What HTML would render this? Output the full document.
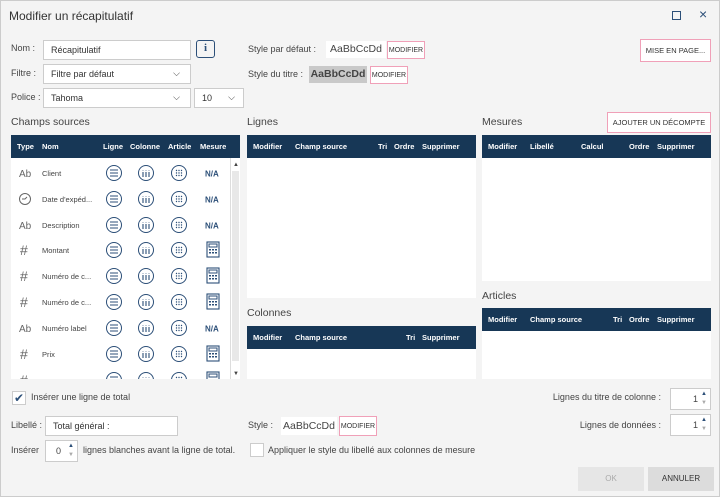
<!DOCTYPE html><html><head><meta charset="utf-8"><style>
*{box-sizing:border-box;margin:0;padding:0}
body{width:720px;height:497px;background:#f4f4f4;font-family:"Liberation Sans",sans-serif;font-size:9px;color:#444;position:relative;overflow:hidden;border:1px solid #ccc}
.a{position:absolute;white-space:nowrap}
.inp{position:absolute;background:#fff;border:1px solid #ccc;padding-left:7px;display:flex;align-items:center;font-size:9px;color:#333}
.btn{position:absolute;border:1px solid #f0a0b8;background:#fff;font-size:7px;display:flex;align-items:center;justify-content:center;color:#333}
.hd{position:absolute;background:#173756;color:#fff;font-weight:bold;font-size:7.5px;height:23px}
.hd span{position:absolute;top:7px}
.body{position:absolute;background:#fff}
.lbl{font-size:10.5px;color:#444}
.spin{position:absolute;background:#fff;border:1px solid #ccc;font-size:9px}
.spin b{position:absolute;right:12px;top:5px;font-weight:normal}
.spin i{position:absolute;right:3px;font-style:normal;font-size:6px;color:#2c4f78}
</style></head><body>
<div class="a" style="left:8px;top:8px;font-size:12px;color:#333">Modifier un récapitulatif</div>
<div class="a" style="left:671px;top:10px;width:9px;height:9px;border:1.5px solid #2c4f78"></div>
<div class="a" style="left:698px;top:5px;font-size:14px;color:#2c4f78">×</div>

<div class="a" style="left:10px;top:42px">Nom :</div>
<div class="inp" style="left:42px;top:39px;width:148px;height:20px">Récapitulatif</div>
<div class="a" style="left:195px;top:39px;width:19px;height:18px;border:1.5px solid #2c4f78;border-radius:3px;color:#2c4f78;font-weight:bold;font-size:11px;text-align:center;line-height:15px;font-family:'Liberation Serif',serif">i</div>
<div class="a" style="left:10px;top:67px">Filtre :</div>
<div class="inp" style="left:42px;top:63px;width:148px;height:20px">Filtre par défaut<span style="position:absolute;right:10px;top:3px;font-size:9px">⌵</span></div>
<div class="a" style="left:10px;top:91px">Police :</div>
<div class="inp" style="left:42px;top:87px;width:148px;height:20px">Tahoma<span style="position:absolute;right:10px;top:3px;font-size:9px">⌵</span></div>
<div class="inp" style="left:193px;top:87px;width:50px;height:20px">10<span style="position:absolute;right:8px;top:3px;font-size:9px">⌵</span></div>

<div class="a" style="left:247px;top:43px">Style par défaut :</div>
<div class="a" style="left:325px;top:40px;width:60px;height:17px;background:#fff;font-size:10.5px;text-align:center;line-height:17px">AaBbCcDd</div>
<div class="btn" style="left:386px;top:40px;width:38px;height:18px">MODIFIER</div>
<div class="a" style="left:247px;top:68px">Style du titre :</div>
<div class="a" style="left:308px;top:65px;width:58px;height:17px;background:#c9c9c9;font-size:10.5px;font-weight:bold;text-align:center;line-height:17px">AaBbCcDd</div>
<div class="btn" style="left:369px;top:65px;width:38px;height:18px">MODIFIER</div>
<div class="btn" style="left:639px;top:38px;width:71px;height:23px;font-size:7.5px">MISE EN PAGE...</div>

<div class="a lbl" style="left:10px;top:115px">Champs sources</div>
<div class="hd" style="left:10px;top:134px;width:229px"><span style="left:6px">Type</span><span style="left:31px">Nom</span><span style="left:92px">Ligne</span><span style="left:119px">Colonne</span><span style="left:157px">Article</span><span style="left:189px">Mesure</span></div>
<div class="body" style="left:10px;top:157px;width:229px;height:221px;overflow:hidden">
<div class="a" style="left:219px;top:0;width:10px;height:221px;background:#fff;border-left:1px solid #ddd"><div style="position:absolute;left:2px;top:4px;font-size:6px">▲</div><div style="position:absolute;left:1px;top:13px;width:7px;height:190px;background:#e8e8e8"></div><div style="position:absolute;left:2px;bottom:2px;font-size:6px">▼</div></div>
<svg width="219" height="221" style="position:absolute;left:0;top:0" font-family="Liberation Sans" font-size="7.5" fill="#444">
<defs>
<g id="L"><circle r="7.5" fill="none" stroke="#2c4f78" stroke-width="1"/><path d="M-4-3h8M-4 0h8M-4 3h8" stroke="#2c4f78" stroke-width="1.1"/></g>
<g id="C"><circle r="7.5" fill="none" stroke="#2c4f78" stroke-width="1"/><path d="M-3-1v5M0-1v5M3-1v5" stroke="#2c4f78" stroke-width="1.1"/><path d="M-3-3v.5M0-3v.5M3-3v.5" stroke="#2c4f78" stroke-width="1.1"/></g>
<g id="A"><circle r="7.5" fill="none" stroke="#2c4f78" stroke-width="1"/><g fill="#2c4f78"><circle cx="-2.5" cy="-2.5" r=".7"/><circle cx="0" cy="-2.5" r=".7"/><circle cx="2.5" cy="-2.5" r=".7"/><circle cx="-2.5" cy="0" r=".7"/><circle cx="0" cy="0" r=".7"/><circle cx="2.5" cy="0" r=".7"/><circle cx="-2.5" cy="2.5" r=".7"/><circle cx="0" cy="2.5" r=".7"/><circle cx="2.5" cy="2.5" r=".7"/></g></g>
<g id="M"><rect x="-6" y="-8" width="12" height="15" fill="none" stroke="#2c4f78" stroke-width="1.1"/><rect x="-4" y="-6" width="8" height="3" fill="none" stroke="#2c4f78"/><g fill="#2c4f78"><rect x="-4" y="-1" width="2" height="1.5"/><rect x="-1" y="-1" width="2" height="1.5"/><rect x="2" y="-1" width="2" height="1.5"/><rect x="-4" y="2" width="2" height="1.5"/><rect x="-1" y="2" width="2" height="1.5"/><rect x="2" y="2" width="2" height="1.5"/></g></g>
<g id="N"><text x="-8" y="3.5" font-weight="bold" font-size="8" fill="#2c4f78">N/A</text></g>
<g id="Ab"><text x="0" y="4" font-size="10" fill="#666">Ab</text></g>
<g id="H"><text x="1" y="5" font-size="14" fill="#666">#</text></g>
<g id="T"><circle cx="6" cy="0" r="5.5" fill="none" stroke="#666"/><path d="M3 0h3l2-2" stroke="#666" fill="none"/></g>
</defs>
<g transform="translate(0,15)"><use href="#Ab" x="8"/><text x="31" y="3">Client</text><use href="#L" x="103"/><use href="#C" x="135"/><use href="#A" x="168"/><use href="#N" x="202"/></g>
<g transform="translate(0,41)"><use href="#T" x="8"/><text x="31" y="3">Date d'expéd...</text><use href="#L" x="103"/><use href="#C" x="135"/><use href="#A" x="168"/><use href="#N" x="202"/></g>
<g transform="translate(0,67)"><use href="#Ab" x="8"/><text x="31" y="3">Description</text><use href="#L" x="103"/><use href="#C" x="135"/><use href="#A" x="168"/><use href="#N" x="202"/></g>
<g transform="translate(0,92)"><use href="#H" x="8"/><text x="31" y="3">Montant</text><use href="#L" x="103"/><use href="#C" x="135"/><use href="#A" x="168"/><use href="#M" x="202"/></g>
<g transform="translate(0,118)"><use href="#H" x="8"/><text x="31" y="3">Numéro de c...</text><use href="#L" x="103"/><use href="#C" x="135"/><use href="#A" x="168"/><use href="#M" x="202"/></g>
<g transform="translate(0,144)"><use href="#H" x="8"/><text x="31" y="3">Numéro de c...</text><use href="#L" x="103"/><use href="#C" x="135"/><use href="#A" x="168"/><use href="#M" x="202"/></g>
<g transform="translate(0,170)"><use href="#Ab" x="8"/><text x="31" y="3">Numéro label</text><use href="#L" x="103"/><use href="#C" x="135"/><use href="#A" x="168"/><use href="#N" x="202"/></g>
<g transform="translate(0,196)"><use href="#H" x="8"/><text x="31" y="3">Prix</text><use href="#L" x="103"/><use href="#C" x="135"/><use href="#A" x="168"/><use href="#M" x="202"/></g>
<g transform="translate(0,222)"><use href="#H" x="8"/><use href="#L" x="103"/><use href="#C" x="135"/><use href="#A" x="168"/><use href="#M" x="202"/></g>
</svg></div>

<div class="a lbl" style="left:246px;top:115px">Lignes</div>
<div class="hd" style="left:246px;top:134px;width:229px"><span style="left:6px">Modifier</span><span style="left:48px">Champ source</span><span style="left:131px">Tri</span><span style="left:147px">Ordre</span><span style="left:175px">Supprimer</span></div>
<div class="body" style="left:246px;top:157px;width:229px;height:140px"></div>
<div class="a lbl" style="left:246px;top:306px">Colonnes</div>
<div class="hd" style="left:246px;top:325px;width:229px"><span style="left:6px">Modifier</span><span style="left:48px">Champ source</span><span style="left:159px">Tri</span><span style="left:175px">Supprimer</span></div>
<div class="body" style="left:246px;top:348px;width:229px;height:30px"></div>

<div class="a lbl" style="left:481px;top:115px">Mesures</div>
<div class="btn" style="left:606px;top:111px;width:104px;height:21px;font-size:7.5px">AJOUTER UN DÉCOMPTE</div>
<div class="hd" style="left:481px;top:134px;width:229px"><span style="left:6px">Modifier</span><span style="left:48px">Libellé</span><span style="left:99px">Calcul</span><span style="left:147px">Ordre</span><span style="left:175px">Supprimer</span></div>
<div class="body" style="left:481px;top:157px;width:229px;height:123px"></div>
<div class="a lbl" style="left:481px;top:289px">Articles</div>
<div class="hd" style="left:481px;top:307px;width:229px"><span style="left:6px">Modifier</span><span style="left:48px">Champ source</span><span style="left:131px">Tri</span><span style="left:147px">Ordre</span><span style="left:175px">Supprimer</span></div>
<div class="body" style="left:481px;top:330px;width:229px;height:48px"></div>

<div class="a" style="left:11px;top:390px;width:14px;height:14px;background:#fff;border:1px solid #ccc;color:#2c4f78;font-size:12px;line-height:12px;text-align:center">✔</div>
<div class="a" style="left:30px;top:391px">Insérer une ligne de total</div>
<div class="a" style="right:58px;top:391px">Lignes du titre de colonne :</div>
<div class="spin" style="left:669px;top:387px;width:41px;height:22px"><b>1</b><i style="top:2px">▲</i><i style="top:11px;color:#aaa">▼</i></div>
<div class="a" style="left:10px;top:419px">Libellé :</div>
<div class="inp" style="left:44px;top:415px;width:133px;height:20px">Total général :</div>
<div class="a" style="left:247px;top:419px">Style :</div>
<div class="a" style="left:280px;top:416px;width:56px;height:18px;background:#fff;font-size:10.5px;text-align:center;line-height:18px">AaBbCcDd</div>
<div class="btn" style="left:338px;top:415px;width:38px;height:20px">MODIFIER</div>
<div class="a" style="right:58px;top:419px">Lignes de données :</div>
<div class="spin" style="left:669px;top:413px;width:41px;height:22px"><b>1</b><i style="top:2px">▲</i><i style="top:11px;color:#aaa">▼</i></div>
<div class="a" style="left:10px;top:444px">Insérer</div>
<div class="spin" style="left:44px;top:439px;width:33px;height:22px"><b style="right:16px">0</b><i style="top:2px">▲</i><i style="top:11px;color:#aaa">▼</i></div>
<div class="a" style="left:82px;top:444px">lignes blanches avant la ligne de total.</div>
<div class="a" style="left:249px;top:442px;width:14px;height:14px;background:#fff;border:1px solid #ccc"></div>
<div class="a" style="left:267px;top:444px">Appliquer le style du libellé aux colonnes de mesure</div>
<div class="a" style="left:577px;top:466px;width:66px;height:24px;background:#e6e6e6;color:#aaa;font-size:8px;text-align:center;line-height:24px">OK</div>
<div class="a" style="left:647px;top:466px;width:66px;height:24px;background:#dcdcdc;color:#333;font-size:8px;text-align:center;line-height:24px">ANNULER</div>
</body></html>
